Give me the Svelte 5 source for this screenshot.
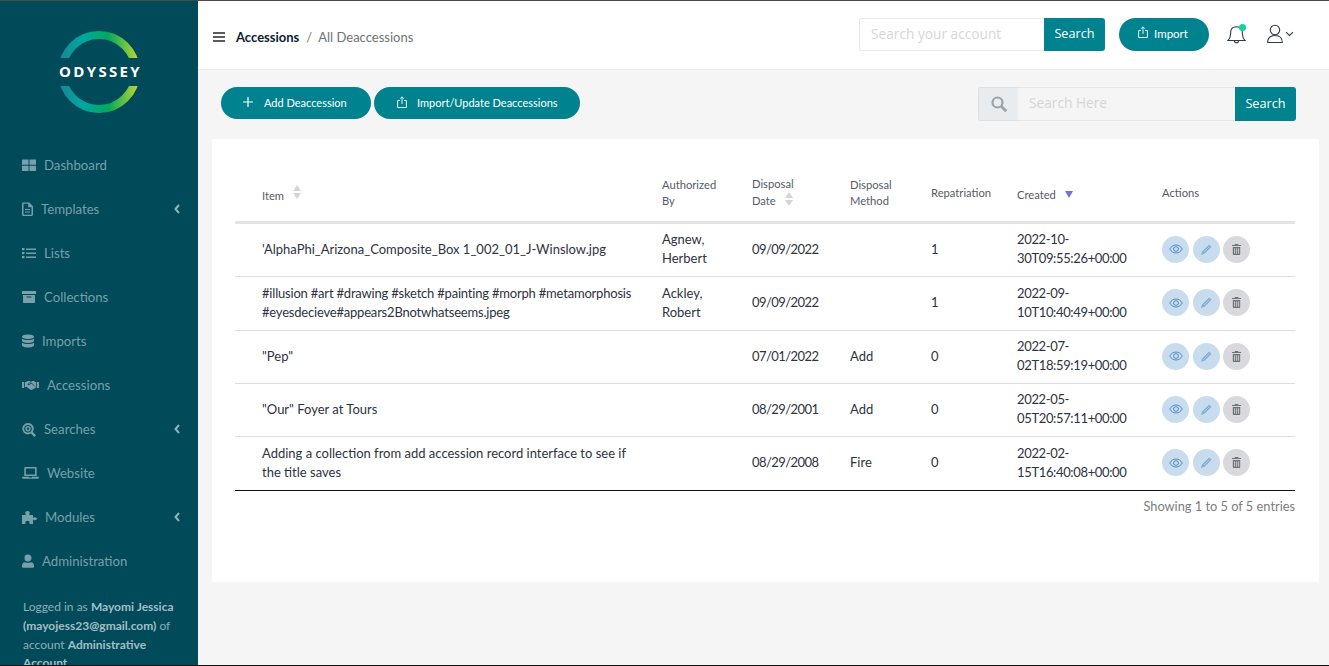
<script>
  const nav = [
    { label: 'Dashboard', icon: 'dash', w: 14 },
    { label: 'Templates', icon: 'file', w: 11, more: true },
    { label: 'Lists', icon: 'list', w: 14 },
    { label: 'Collections', icon: 'archive', w: 14 },
    { label: 'Imports', icon: 'db', w: 12 },
    { label: 'Accessions', icon: 'hands', w: 17 },
    { label: 'Searches', icon: 'search', w: 14, more: true },
    { label: 'Website', icon: 'laptop', w: 17 },
    { label: 'Modules', icon: 'puzzle', w: 15, more: true },
    { label: 'Administration', icon: 'user', w: 12 }
  ];
  const rows = [
    { item: "'AlphaPhi_Arizona_Composite_Box 1_002_01_J-Winslow.jpg", by: 'Agnew, Herbert', date: '09/09/2022', method: '', rep: '1', created: '2022-10-30T09:55:26+00:00' },
    { item: '#illusion #art #drawing #sketch #painting #morph #metamorphosis #eyesdecieve#appears2Bnotwhatseems.jpeg', by: 'Ackley, Robert', date: '09/09/2022', method: '', rep: '1', created: '2022-09-10T10:40:49+00:00' },
    { item: '"Pep"', by: '', date: '07/01/2022', method: 'Add', rep: '0', created: '2022-07-02T18:59:19+00:00' },
    { item: '"Our" Foyer at Tours', by: '', date: '08/29/2001', method: 'Add', rep: '0', created: '2022-05-05T20:57:11+00:00' },
    { item: 'Adding a collection from add accession record interface to see if the title saves', by: '', date: '08/29/2008', method: 'Fire', rep: '0', created: '2022-02-15T16:40:08+00:00' }
  ];
</script>

<div class="page">
  <aside class="side">
    <svg class="logo" width="198" height="122" viewBox="0 0 198 122">
      <defs>
        <linearGradient id="ring" gradientUnits="userSpaceOnUse" x1="60" y1="0" x2="138" y2="0">
          <stop offset="0" stop-color="#1b8496" />
          <stop offset="0.3" stop-color="#00a9a0" />
          <stop offset="0.62" stop-color="#02a85c" />
          <stop offset="1" stop-color="#bcd631" />
        </linearGradient>
        <clipPath id="ringclip">
          <rect x="50" y="20" width="98" height="37" />
          <rect x="50" y="85" width="98" height="38" />
        </clipPath>
      </defs>
      <circle cx="99" cy="71" r="37" fill="none" stroke="url(#ring)" stroke-width="8" clip-path="url(#ringclip)" />
      <text x="100.500" y="76" text-anchor="middle" class="logotext">ODYSSEY</text>
    </svg>

    <nav class="nav">
      {#each nav as n}
        <div class="navitem">
          <svg class="nicon" width={n.w} height="16" viewBox="0 0 {n.w} 16" fill="currentColor">
            {#if n.icon === 'dash'}
              <path d="M0 2.500h6.500v5.200H0zM7.500 2.500H14v5.200H7.500zM0 8.700h6.500v5.300H0zM7.500 8.700H14v5.300H7.500z" />
            {:else if n.icon === 'file'}
              <path fill-rule="evenodd" d="M1.500 1.500h5.700l3.800 3.800v8.200c0 .8-.7 1.500-1.500 1.500h-8C.7 15 0 14.300 0 13.500v-10.500c0-.8.700-1.500 1.500-1.500zm0 1.300v10.900h8V6.300H6.200V2.800zM3 8h5v1.100H3zm0 2.500h5v1.100H3z" />
            {:else if n.icon === 'list'}
              <path d="M0 3h2.500v2.300H0zM4 3.400h10v1.600H4zM0 7h2.500v2.300H0zM4 7.400h10V9H4zM0 11h2.500v2.300H0zM4 11.400h10V13H4z" />
            {:else if n.icon === 'archive'}
              <path d="M0 2h14v3H0zM1 6h12v7.500c0 .3-.2.500-.5.500h-11c-.3 0-.5-.2-.5-.5zm3.500 1.600v1h5v-1z" fill-rule="evenodd" />
            {:else if n.icon === 'db'}
              <path d="M6 1.500c3.300 0 6 .9 6 2.200S9.300 5.900 6 5.900 0 5 0 3.700 2.700 1.500 6 1.500zM0 5.500c1.200 1 3.500 1.500 6 1.500s4.800-.5 6-1.500v2.200c0 1.200-2.700 2.200-6 2.200S0 8.900 0 7.700zM0 9.600c1.200 1 3.500 1.500 6 1.500s4.800-.5 6-1.500v2.600c0 1.200-2.700 2.300-6 2.300S0 13.400 0 12.200z" />
            {:else if n.icon === 'hands'}
              <path fill-rule="evenodd" d="M0 5h2.200v6H0zM14.800 5H17v6h-2.200zM3 5.200 6.700 3.800l2 .6L5.800 6.900c-.4.500.4 1.400 1.300 1l2.200-1.500 4.300 3.800c.3.500-.2 1.200-.8.900-.1.700-.8 1-1.300.7-.2.600-.8.900-1.300.6-.3.700-1.300.800-1.800.4L4.600 10H3zM9.800 4.200l1.500-.4 2.700 1.400v4.700h-.3L9.500 5.500 7 7.100l-.4-.4z" />
            {:else if n.icon === 'search'}
              <path fill-rule="evenodd" d="M6 2a5.700 5.700 0 0 1 4.700 8.900L14 14.200l-1.700 1.700-3.300-3.300A5.700 5.700 0 1 1 6 2zm0 1.900a3.800 3.800 0 1 0 0 7.600 3.800 3.800 0 0 0 0-7.600zM6 5a2.700 2.700 0 1 1-.01 5.400A2.700 2.700 0 0 1 6 5zm0 1.500a1.200 1.200 0 1 0 .01 2.400A1.200 1.200 0 0 0 6 6.500z" />
            {:else if n.icon === 'laptop'}
              <path fill-rule="evenodd" d="M3.500 2h10c.7 0 1.200.5 1.200 1.200V11H2.300V3.200C2.300 2.500 2.800 2 3.500 2zm.4 1.500V9.500h9.200v-6zM0 11.800h7v.7h3v-.7h7v.7c0 .6-.6 1.200-1.300 1.200H1.300c-.7 0-1.300-.6-1.300-1.200z" />
            {:else if n.icon === 'puzzle'}
              <path d="M0 6h4.200c-.6-.7-1-1.200-1-2C3.200 2.900 4.300 2 5.500 2s2.300.9 2.300 2c0 .8-.4 1.300-1 2H11v3c.5-.5 1-.7 1.700-.7 1.200 0 2.300.6 2.300 1.500s-1.100 1.500-2.300 1.500c-.7 0-1.200-.2-1.700-.7V15H7.300c.2-.5.300-1 .3-1.500 0-1-1-1.800-2.100-1.800s-2.100.8-2.100 1.800c0 .5.100 1 .3 1.500H0z" />
            {:else}
              <path d="M6 1.500a3.500 3.500 0 1 1-.01 7A3.500 3.500 0 0 1 6 1.500zM3.200 9.200c.8.400 1.800.6 2.800.6s2-.2 2.800-.6c2 .2 3.200 1.500 3.200 3.500v.8c0 .8-.6 1.300-1.400 1.300H1.400C.6 14.800 0 14.300 0 13.500v-.8c0-2 1.200-3.300 3.200-3.500z" />
            {/if}
          </svg>
          <span>{n.label}</span>
          {#if n.more}
            <svg class="chev" width="6" height="10" viewBox="0 0 6 10"><path d="M5 1 1.500 5 5 9" fill="none" stroke="currentColor" stroke-width="2" /></svg>
          {/if}
        </div>
      {/each}
    </nav>

    <p class="logged">Logged in as <b>Mayomi Jessica (mayojess23@gmail.com)</b> of account <b>Administrative Account</b></p>
  </aside>

  <div class="content">
    <header class="top">
      <svg class="burger" width="12" height="10" viewBox="0 0 12 10"><path d="M0 0h12v2H0zM0 4h12v2H0zM0 8h12v2H0z" fill="#5a5c62" /></svg>
      <span class="crumb1">Accessions</span>
      <span class="slash">/</span>
      <span class="crumb2">All Deaccessions</span>
      <div class="topright">
        <div class="acct">
          <div class="fake-input">Search your account</div>
          <button class="sbtn">Search</button>
        </div>
        <button class="importbtn">
          <svg width="10" height="12" viewBox="0 0 10 12" fill="none" stroke="#fff" stroke-width=".9"><path d="M3 4.500H.6v7h8.800v-7H7M5 8V1M3.200 2.700 5 .8l1.800 1.900" /></svg>
          <span>Import</span>
        </button>
        <div class="bell">
          <svg width="19" height="20" viewBox="0 0 19 20" fill="none" stroke="#2f3a4d" stroke-width="1.100"><path d="M1 16.500c1.700-1.500 2.400-3 2.500-6 .1-3.500 0-7.700 6-7.700s5.900 4.200 6 7.700c.1 3 .8 4.500 2.500 6zM7.500 16.700c-.3 2.800 4.300 2.800 4 0" /></svg>
          <i class="dot"></i>
        </div>
        <div class="usr">
          <svg width="28" height="20" viewBox="0 0 28 20" fill="none" stroke="#2f3a4d" stroke-width="1.100"><circle cx="8" cy="6" r="4.700" /><path d="M.7 18.500c0-4.500 2.700-7 7.300-7s7.300 2.500 7.300 7zM19 8.200l3.500 3.300 3.500-3.300" /></svg>
        </div>
      </div>
    </header>

    <main class="main">
      <div class="toolbar">
        <button class="pill add">
          <svg width="10" height="10" viewBox="0 0 10 10"><path d="M5 0v10M0 5h10" stroke="#fff" stroke-width="1.200" /></svg>
          <span>Add Deaccession</span>
        </button>
        <button class="pill upd">
          <svg width="10" height="12" viewBox="0 0 10 12" fill="none" stroke="#fff" stroke-width=".9"><path d="M3 4.500H.6v7h8.800v-7H7M5 8V1M3.200 2.700 5 .8l1.800 1.900" /></svg>
          <span>Import/Update Deaccessions</span>
        </button>
        <div class="tsearch">
          <div class="addon">
            <svg width="16" height="16" viewBox="0 0 16 16" fill="none" stroke="#9aa3a8" stroke-width="2.200"><circle cx="6.500" cy="6.500" r="5" /><path d="m10.200 10.200 5 5" stroke-width="2.800" /></svg>
          </div>
          <div class="tinput">Search Here</div>
          <button class="sbtn tb">Search</button>
        </div>
      </div>

      <section class="card">
        <table>
          <colgroup>
            <col class="c1" /><col class="c2" /><col class="c3" /><col class="c4" /><col class="c5" /><col class="c6" /><col class="c7" />
          </colgroup>
          <thead>
            <tr>
              <th class="first"><span class="lower">Item</span><svg class="sort" width="8" height="14" viewBox="0 0 8 14"><path d="M4 0l4 6H0zM4 14l4-6H0z" fill="#d5d5d8" /></svg></th>
              <th>Authorized<br />By</th>
              <th class="tall">Disposal<br />Date<svg class="sort d" width="8" height="14" viewBox="0 0 8 14"><path d="M4 0l4 6H0zM4 14l4-6H0z" fill="#d5d5d8" /></svg></th>
              <th>Disposal<br />Method</th>
              <th class="up">Repatriation</th>
              <th><span class="lower">Created</span><svg class="sort2" width="8" height="7" viewBox="0 0 8 7"><path d="M0 0h8L4 7z" fill="#7173d6" /></svg></th>
              <th class="up">Actions</th>
            </tr>
          </thead>
          <tbody>
            {#each rows as r}
              <tr>
                <td class="first">{r.item}</td>
                <td class="by">{r.by}</td>
                <td class="date">{r.date}</td>
                <td>{r.method}</td>
                <td>{r.rep}</td>
                <td class="created">{r.created}</td>
                <td>
                  <div class="acts">
                    <span class="act blue">
                      <svg width="14" height="10" viewBox="0 0 14 10" fill="none" stroke="#4f90c6" stroke-width="1"><path d="M.7 5C2.300 2.300 4.500 1 7 1s4.700 1.300 6.300 4C11.700 7.700 9.500 9 7 9S2.300 7.700.7 5z" /><circle cx="7" cy="5" r="2.400" /></svg>
                    </span>
                    <span class="act blue">
                      <svg width="11" height="11" viewBox="0 0 11 11"><path d="M8.200.5l2.300 2.300-7 7L0 11l1.200-3.500z" fill="#7fadd8" /><path d="M2.500 8.500 8.800 2.200" stroke="#c9dcee" stroke-width=".6" /></svg>
                    </span>
                    <span class="act grey">
                      <svg width="9" height="11" viewBox="0 0 9 11" fill="#6f7377"><path d="M3 0h3l.5 1H9v1H0V1h2.500zM.8 3h7.400v7c0 .6-.4 1-1 1H1.800c-.6 0-1-.4-1-1zm1.400 1.200v5.600h.9V4.200zm2 0v5.600h.9V4.200zm2 0v5.600h.9V4.200z" fill-rule="evenodd" /></svg>
                    </span>
                  </div>
                </td>
              </tr>
            {/each}
          </tbody>
        </table>
        <div class="info">Showing 1 to 5 of 5 entries</div>
      </section>
    </main>
  </div>
</div>

<style>
  :global(body) { margin: 0; }
  * { box-sizing: border-box; }
  .page {
    display: flex;
    width: 1329px;
    height: 666px;
    overflow: hidden;
    border-top: 1px solid #4a4a4a;
    border-bottom: 1px solid #111;
    font-family: Lato, "Open Sans", sans-serif;
    background: #f5f5f5;
  }
  .side {
    width: 198px;
    flex: none;
    background: #004a59;
    color: #78a0aa;
    overflow: hidden;
  }
  .logo { display: block; }
  .logotext { font: 700 15px "Open Sans", sans-serif; letter-spacing: 2.300px; fill: #fff; }
  .nav { display: flex; flex-direction: column; margin-top: 20px; padding-left: 22px; padding-right: 18px; }
  .navitem { display: flex; align-items: center; gap: 8px; height: 44px; font-size: 13.200px; }
  .nicon { flex: none; }
  .chev { margin-left: auto; color: #8fb3bc; }
  .logged { margin: 15px 0 0; padding: 0 22px 0 23px; font-size: 12px; line-height: 18.800px; color: #8fafb8; }
  .logged b { font-weight: 700; color: #a3bfc6; }

  .content { flex: 1; display: flex; flex-direction: column; min-width: 0; }
  .top {
    height: 69px;
    flex: none;
    background: #fff;
    border-bottom: 1px solid #eeeeee;
    display: flex;
    align-items: center;
    padding: 0 35px 0 15px;
    font-size: 13px;
  }
  .burger { margin: 4px 11px 0 0; }
  .crumb1 { font-weight: 700; color: #0c1c33; margin-top: 4px; }
  .slash { color: #777; margin: 4px 6px 0 7px; }
  .crumb2 { color: #6f7276; margin-top: 4px; }
  .topright { margin-left: auto; margin-bottom: 2px; display: flex; align-items: center; }
  .acct { display: flex; }
  .fake-input {
    width: 185px; height: 33px; border: 1px solid #e8e8e8; border-right: 0; border-radius: 3px 0 0 3px;
    padding: 0 11px; color: #d6d6d6; font: 13.700px/30px "Open Sans", sans-serif;
  }
  .sbtn {
    width: 61px; height: 33px; border: 0; background: #00828f; color: #fff; border-radius: 0 3px 3px 0;
    font: 12.700px "Open Sans", sans-serif; padding: 0 0 3px;
  }
  .importbtn {
    margin-left: 14px; width: 90px; height: 33px; border: 0; border-radius: 17px; background: #00828f; color: #fff;
    display: flex; align-items: center; justify-content: center; gap: 6px; font: 11.500px Lato, sans-serif; padding: 0 2px 2px 0;
  }
  .importbtn svg { margin-top: -3px; }
  .bell { position: relative; margin-left: 18px; height: 20px; width: 19px; }
  .bell svg, .usr svg { display: block; }
  .dot { position: absolute; top: 0; right: 0; width: 7px; height: 7px; border-radius: 50%; background: #0fd3a0; }
  .usr { margin-left: 21px; margin-right: -1px; }

  .main { flex: 1; padding: 17px 10px 0 14px; min-height: 0; }
  .toolbar { display: flex; align-items: flex-start; padding-left: 9px; height: 52px; }
  .pill {
    height: 32px; border: 0; border-radius: 16px; background: #00828f; color: #fff;
    display: flex; align-items: center; font: 11px Lato, sans-serif; padding: 0 0 2px;
  }
  .add { width: 150px; padding-left: 22px; gap: 11px; }
  .upd { width: 206px; margin-left: 3px; padding-left: 23px; gap: 10px; }
  .tsearch { margin-left: auto; margin-right: 23px; display: flex; height: 34px; }
  .addon {
    width: 40px; background: #e9ecef; border: 1px solid #dde1e4; border-right: 0; border-radius: 3px 0 0 3px;
    display: flex; align-items: center; justify-content: center;
  }
  .tinput {
    width: 217px; border-top: 1px solid #e6e6e6; border-bottom: 1px solid #e6e6e6; padding-left: 11px;
    color: #d6d6d6; font: 13.700px/30px "Open Sans", sans-serif;
  }
  .tb { height: 34px; }

  .card { background: #fff; height: 443px; padding: 22px 24px 0 23px; }
  table { border-collapse: collapse; table-layout: fixed; width: 1060px; }
  .c1 { width: 427px; } .c2 { width: 90px; } .c3 { width: 98px; } .c4 { width: 81px; }
  .c5 { width: 86px; } .c6 { width: 145px; } .c7 { width: 133px; }
  th {
    height: 61px; border-bottom: 3px solid #e3e3e8; padding: 5px 0 0; text-align: left; vertical-align: middle;
    font-weight: 400; font-size: 11.200px; line-height: 16px; color: #555b66;
  }
  th.first, td.first { padding-left: 27px; padding-right: 22px; }
  th .lower { position: relative; top: 2px; }
  th.tall { line-height: 17px; padding-top: 3px; }
  .sort { margin-left: 9px; vertical-align: -1px; }
  .sort.d { margin-left: 9px; }
  .sort2 { margin-left: 9px; vertical-align: -1px; }
  td {
    height: 53px; padding: 0 0 1px; border-bottom: 1px solid #dddddd; font-size: 13px; line-height: 19px; color: #2d3340; vertical-align: middle;
  }
  tbody tr:nth-child(1) td, tbody tr:nth-child(2) td { height: 54px; }
  tbody tr:nth-child(2) td.first { padding-right: 6px; letter-spacing: -.2px; }
  tbody tr:last-child td { border-bottom: 1px solid #111; height: 54px; }
  .by { padding-right: 14px; }
  .date { letter-spacing: -.55px; }
  .created { overflow-wrap: anywhere; padding-right: 4px; letter-spacing: -.35px; }
  .acts { display: flex; gap: 3.500px; }
  .act { width: 27px; height: 27px; border-radius: 50%; display: flex; align-items: center; justify-content: center; }
  .blue { background: #c9dcee; }
  .grey { background: #d9d9dd; }
  .info { text-align: right; font-size: 12.800px; color: #7a7d80; margin-top: 7px; }
</style>
